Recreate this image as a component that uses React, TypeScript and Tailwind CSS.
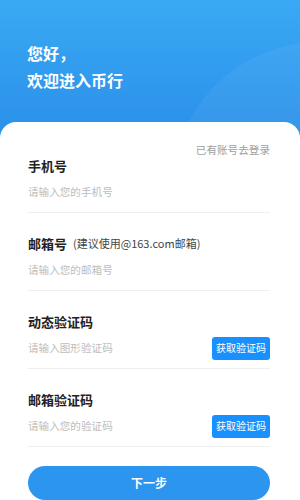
import React from "react";

const font = { fontFamily: '"Noto Sans CJK SC", "Noto Sans", sans-serif' };

function Field({ label, hint, placeholder, button }: { label: string; hint?: string; placeholder: string; button?: boolean }) {
  return (
    <div className="flex flex-col">
      <div className="h-[16px] flex items-center gap-[6px]">
        <span className="text-[13px] font-bold text-[#222] leading-none">{label}</span>
        {hint && <span className="text-[11px] text-[#444] leading-none">{hint}</span>}
      </div>
      <div className="mt-[7px] h-[24px] flex items-center justify-between">
        <span className="text-[10.6px] text-[#bdbdbd] leading-none">{placeholder}</span>
        {button && (
          <div className="w-[58px] h-[23px] rounded-[3px] bg-[#1890ff] flex items-center justify-center text-white text-[10px] leading-none">
            获取验证码
          </div>
        )}
      </div>
      <div className="mt-[8px] h-px bg-[#efefef]" />
    </div>
  );
}

export default function App() {
  return (
    <div className="w-[300px] h-[500px] overflow-hidden relative bg-[#2d93ea]" style={font}>
      <div className="relative h-[140px] bg-gradient-to-b from-[#3aa9f4] to-[#2a8fe9] overflow-hidden">
        <div className="absolute left-[172px] top-[42px] w-[296px] h-[296px] rounded-full bg-white/[0.05]" />
        <div className="relative pt-[40px] pl-[27px] text-white font-bold text-[16px] leading-[27px]">
          <div>您好，</div>
          <div>欢迎进入币行</div>
        </div>
      </div>
      <div className="absolute left-0 top-[122px] w-[300px] h-[378px] bg-white rounded-t-[16px] pl-[28px] pr-[30px] pt-[21px]">
        <div className="h-[14px] flex items-center justify-end">
          <span className="text-[10.6px] text-[#9e9e9e] leading-none">已有账号去登录</span>
        </div>
        <Field label="手机号" placeholder="请输入您的手机号" />
        <div className="mt-[22px]">
          <Field label="邮箱号" hint="(建议使用@163.com邮箱)" placeholder="请输入您的邮箱号" />
        </div>
        <div className="mt-[22px]">
          <Field label="动态验证码" placeholder="请输入图形验证码" button />
        </div>
        <div className="mt-[22px]">
          <Field label="邮箱验证码" placeholder="请输入您的验证码" button />
        </div>
        <div className="mt-[19px] h-[34px] rounded-full bg-[#2b95ef] flex items-center justify-center text-white font-bold text-[12px]">
          下一步
        </div>
      </div>
    </div>
  );
}
